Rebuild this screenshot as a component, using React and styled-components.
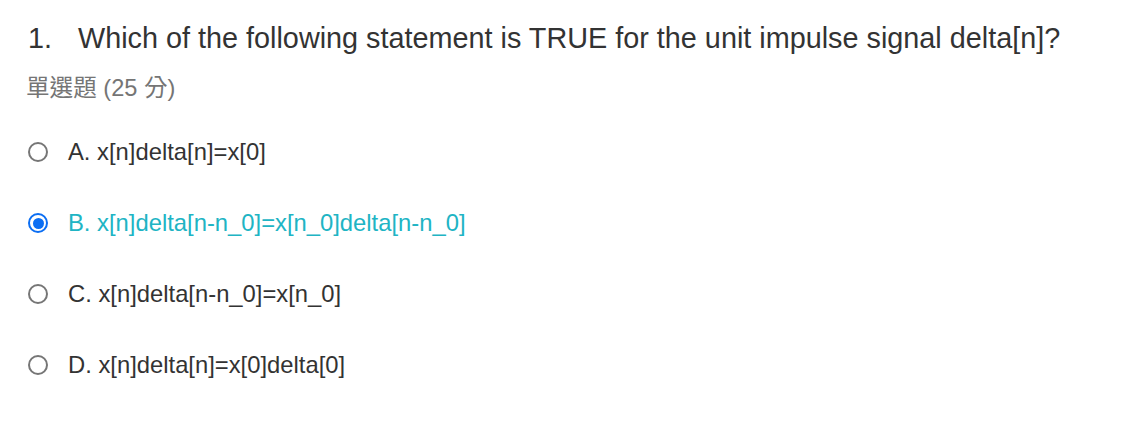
import React from "react";
import styled, { createGlobalStyle } from "styled-components";

const GlobalStyle = createGlobalStyle`
  body {
    margin: 0;
    background: #fff;
    font-family: "Liberation Sans", Arial, "Noto Sans CJK TC", sans-serif;
  }
`;

const Page = styled.div`
  padding: 20px 26px 0 28px;
`;

const Title = styled.div`
  display: flex;
  font-size: 28.8px;
  line-height: 36px;
  color: #333;
`;

const Num = styled.span`
  width: 50px;
  flex-shrink: 0;
`;

const Meta = styled.div`
  margin-top: 17px;
  margin-left: -2px;
  font-size: 23.6px;
  line-height: 30px;
  color: #757575;
`;

const Options = styled.div`
  display: flex;
  flex-direction: column;
  margin-top: 34px;
  gap: 41px;
`;

const Option = styled.label`
  display: flex;
  align-items: center;
  height: 30px;
  font-size: 23.8px;
  color: ${(p) => (p.$checked ? "#20b4c4" : "#333")};
`;

const Radio = styled.span`
  box-sizing: border-box;
  width: 20px;
  height: 20px;
  border-radius: 50%;
  border: ${(p) => (p.$checked ? "2.5px solid #0b6ef3" : "2px solid #767676")};
  margin-right: 20px;
  display: flex;
  align-items: center;
  justify-content: center;

  &::after {
    content: "";
    width: 11px;
    height: 11px;
    border-radius: 50%;
    background: ${(p) => (p.$checked ? "#0b6ef3" : "transparent")};
  }
`;

const options = [
  "A. x[n]delta[n]=x[0]",
  "B. x[n]delta[n-n_0]=x[n_0]delta[n-n_0]",
  "C. x[n]delta[n-n_0]=x[n_0]",
  "D. x[n]delta[n]=x[0]delta[0]",
];

export default function App() {
  const selected = 1;
  return (
    <>
      <GlobalStyle />
      <Page>
        <Title>
          <Num>1.</Num>
          <span>Which of the following statement is TRUE for the unit impulse signal delta[n]?</span>
        </Title>
        <Meta>單選題 (25 分)</Meta>
        <Options>
          {options.map((o, i) => (
            <Option key={o} $checked={i === selected}>
              <Radio $checked={i === selected} />
              {o}
            </Option>
          ))}
        </Options>
      </Page>
    </>
  );
}
